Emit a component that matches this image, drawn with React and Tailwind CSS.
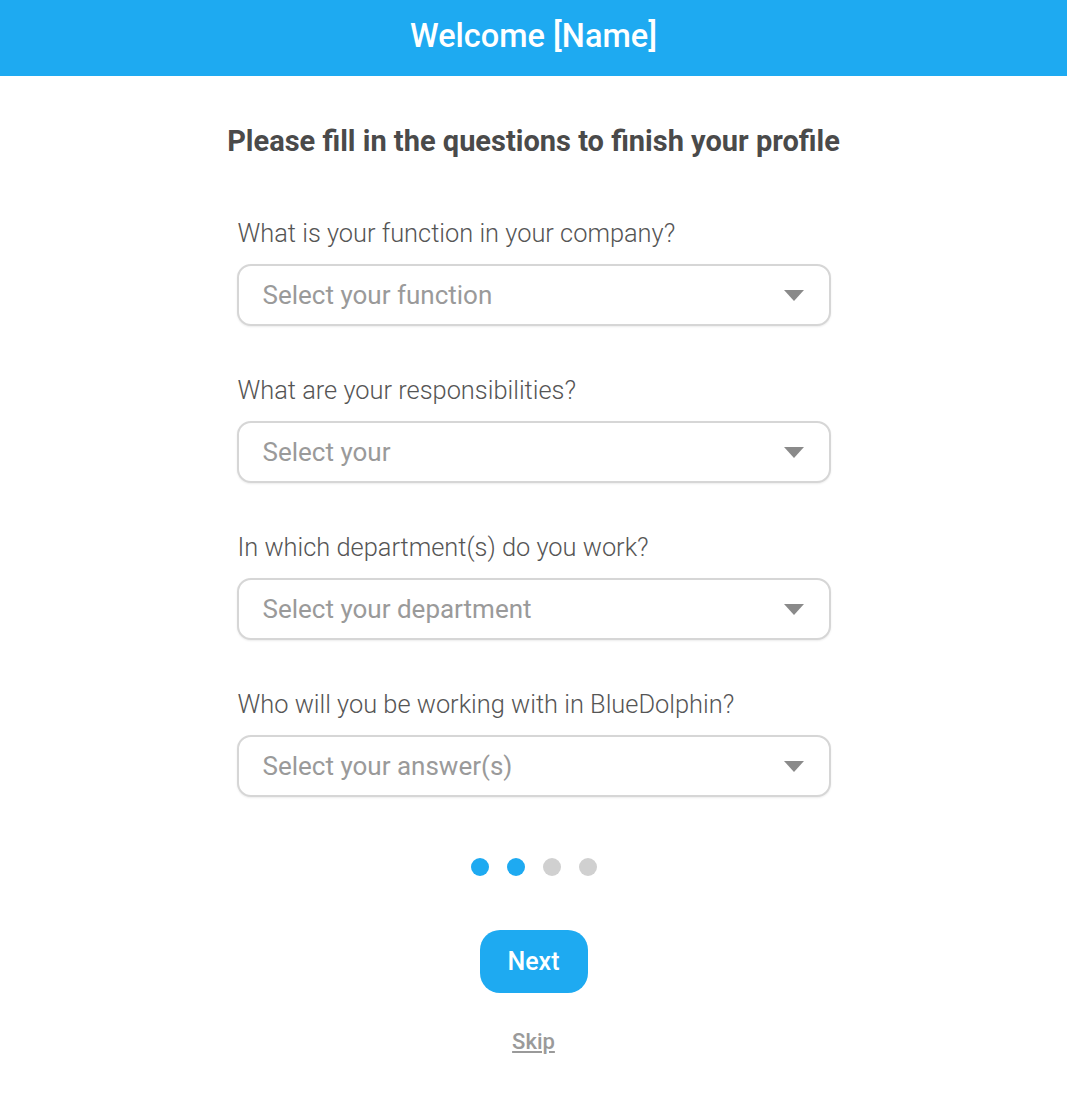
import React from "react";

const questions = [
  { label: "What is your function in your company?", placeholder: "Select your function" },
  { label: "What are your responsibilities?", placeholder: "Select your" },
  { label: "In which department(s) do you work?", placeholder: "Select your department" },
  { label: "Who will you be working with in BlueDolphin?", placeholder: "Select your answer(s)" },
];

function SelectBox({ placeholder }) {
  return (
    <button
      type="button"
      className="flex h-[62px] w-full items-center justify-between rounded-[14px] border-2 border-[#d6d6d6] bg-white pl-[24px] pr-[25px] text-left shadow-[0_1px_2px_rgba(0,0,0,0.08)]"
    >
      <span className="text-[26px] text-[#9a9a9a]">{placeholder}</span>
      <svg width="20" height="12" viewBox="0 0 20 12" className="mt-[1px]">
        <path d="M0 0 H20 L10 11 Z" fill="#8a8a8a" />
      </svg>
    </button>
  );
}

export default function App() {
  const step = 2;
  return (
    <div className="min-h-screen bg-white font-['Roboto',sans-serif]">
      <header className="flex h-[76px] items-center justify-center bg-[#1eaaf1] pb-[4px]">
        <h1 className="text-[32.5px] font-medium text-white">Welcome [Name]</h1>
      </header>

      <main className="mx-auto flex w-[594px] flex-col items-center">
        <h2 className="mt-[45px] whitespace-nowrap text-[29px] leading-[40px] font-bold text-[#4a4a4a]">
          Please fill in the questions to finish your profile
        </h2>

        <div className="mt-[56px] flex w-full flex-col gap-[48px]">
          {questions.map((q) => (
            <div key={q.label} className="flex flex-col">
              <label className="mb-[15px] pl-[1px] text-[25.4px] font-light leading-[32px] text-[#555]">
                {q.label}
              </label>
              <SelectBox placeholder={q.placeholder} />
            </div>
          ))}
        </div>

        <div className="mt-[61px] flex gap-[18px]">
          {[0, 1, 2, 3].map((i) => (
            <span
              key={i}
              className={`h-[18px] w-[18px] rounded-full ${i < step ? "bg-[#1eaaf1]" : "bg-[#d0d0d0]"}`}
            />
          ))}
        </div>

        <button
          type="button"
          className="mt-[54px] h-[63px] w-[108px] rounded-[20px] bg-[#1eaaf1] text-[25px] font-medium text-white"
        >
          Next
        </button>

        <a href="#" className="mt-[32px] text-[22px] font-medium text-[#9a9a9a] underline">
          Skip
        </a>
      </main>
    </div>
  );
}
